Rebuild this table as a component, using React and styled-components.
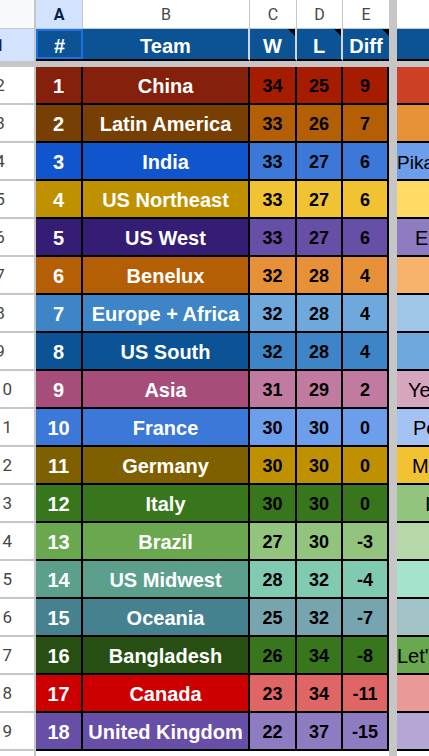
import React from "react";
import styled, { createGlobalStyle } from "styled-components";

const GlobalStyle = createGlobalStyle`
  html, body {
    margin: 0;
    padding: 0;
    background: #fff;
    overflow: hidden;
  }
  body {
    font-family: "Liberation Sans", Arial, sans-serif;
  }
`;

// row header | A | B | C | D | E | freeze bar | F
const COLUMNS = "36px 47px 167px 47px 46px 46px 8px 32px";
const FREEZE = "#c6c6c6";
const GRID = "#c4c7c5";
const HEADER_BLUE = "#0b5394";

const Sheet = styled.div`
  width: 429px;
  height: 756px;
  overflow: hidden;
  background: #fff;
`;

const Row = styled.div`
  display: grid;
  grid-template-columns: ${COLUMNS};
  height: ${(p) => p.$h}px;
`;

const FreezeRow = styled.div`
  height: 6px;
  background: ${FREEZE};
`;

const FreezeCol = styled.div`
  background: ${FREEZE};
`;

/* column letters */
const Corner = styled.div`
  background: #f8f9fa;
  border-right: 2px solid ${GRID};
  border-bottom: 1px solid ${GRID};
`;

const ColLetter = styled.div`
  display: flex;
  align-items: center;
  justify-content: center;
  background: ${(p) => (p.$active ? "#d3e3fd" : "#fff")};
  color: ${(p) => (p.$active ? "#041e49" : "#444746")};
  font-family: Roboto, "Liberation Sans", Arial, sans-serif;
  font-size: 16px;
  font-weight: ${(p) => (p.$active ? 700 : 400)};
  border-right: ${(p) => (p.$last ? 0 : `1px solid ${GRID}`)};
  border-bottom: 1px solid ${GRID};
`;

/* row numbers, scrolled so only the right part shows */
const RowHead = styled.div`
  display: flex;
  align-items: center;
  overflow: hidden;
  box-sizing: border-box;
  background: ${(p) => (p.$active ? "#d3e3fd" : "#fff")};
  color: ${(p) => (p.$active ? "#041e49" : "#444746")};
  border-right: 2px solid ${GRID};
  border-bottom: ${(p) => (p.$open ? 0 : p.$active ? 0 : `2px solid ${GRID}`)};
  font-family: Roboto, "Liberation Sans", Arial, sans-serif;
  font-size: 17px;

  span {
    flex: none;
    width: 14px;
    margin-left: -7px;
    text-align: center;
  }
`;

const HeadCell = styled.div`
  position: relative;
  display: flex;
  align-items: center;
  justify-content: center;
  box-sizing: border-box;
  padding-top: 4px;
  background: ${HEADER_BLUE};
  color: #fff;
  font-size: 20px;
  font-weight: 700;
  border-right: ${(p) => (p.$edge ? `2px solid ${p.$edge}` : 0)};
  border-bottom: 2px solid #000;
  box-shadow: ${(p) => (p.$selected ? "inset 0 0 0 2px #1a73e8" : "none")};

  &::after {
    content: "";
    display: ${(p) => (p.$note ? "block" : "none")};
    position: absolute;
    top: 0;
    right: 0;
    border-style: solid;
    border-width: 0 7px 7px 0;
    border-color: transparent #000 transparent transparent;
  }
`;

const TeamCell = styled.div`
  display: flex;
  align-items: center;
  justify-content: center;
  box-sizing: border-box;
  padding-top: 3px;
  background: ${(p) => p.$bg};
  color: #fff;
  font-size: 20px;
  font-weight: 700;
  white-space: nowrap;
  overflow: hidden;
  border-right: 2px solid #000;
  border-bottom: 2px solid #000;
`;

const StatCell = styled(TeamCell)`
  color: #000;
  font-size: 18px;
`;

const NoteCell = styled.div`
  display: flex;
  align-items: center;
  box-sizing: border-box;
  padding: 3px 0 0 ${(p) => p.$pad || 0}px;
  background: ${(p) => p.$bg};
  color: #000;
  font-size: ${(p) => p.$size || 20}px;
  white-space: nowrap;
  overflow: hidden;
  border-bottom: 2px solid #000;
`;

const Blank = styled.div`
  background: #fff;
  grid-column: ${(p) => p.$span || "auto"};
`;

const teams = [
  { n: 1, name: "China", base: "#85200c", mid: "#a61c00", light: "#cc4125", w: 34, l: 25, d: 9 },
  { n: 2, name: "Latin America", base: "#783f04", mid: "#b45f06", light: "#e69138", w: 33, l: 26, d: 7 },
  { n: 3, name: "India", base: "#1155cc", mid: "#3c78d8", light: "#6d9eeb", w: 33, l: 27, d: 6, note: "Pika", pad: 0, size: 19 },
  { n: 4, name: "US Northeast", base: "#bf9000", mid: "#f1c232", light: "#ffd966", w: 33, l: 27, d: 6 },
  { n: 5, name: "US West", base: "#351c75", mid: "#674ea7", light: "#8e7cc3", w: 33, l: 27, d: 6, note: "E", pad: 18 },
  { n: 6, name: "Benelux", base: "#b45f06", mid: "#e69138", light: "#f6b26b", w: 32, l: 28, d: 4 },
  { n: 7, name: "Europe + Africa", base: "#3d85c6", mid: "#6fa8dc", light: "#9fc5e8", w: 32, l: 28, d: 4 },
  { n: 8, name: "US South", base: "#0b5394", mid: "#3d85c6", light: "#6fa8dc", w: 32, l: 28, d: 4 },
  { n: 9, name: "Asia", base: "#a64d79", mid: "#c27ba0", light: "#d5a6bd", w: 31, l: 29, d: 2, note: "Ye", pad: 11 },
  { n: 10, name: "France", base: "#3c78d8", mid: "#6d9eeb", light: "#a4c2f4", w: 30, l: 30, d: 0, note: "Pe", pad: 16 },
  { n: 11, name: "Germany", base: "#7f6000", mid: "#bf9000", light: "#f1c232", w: 30, l: 30, d: 0, note: "M", pad: 15 },
  { n: 12, name: "Italy", base: "#38761d", mid: "#38761d", light: "#93c47d", w: 30, l: 30, d: 0, note: "I", pad: 28 },
  { n: 13, name: "Brazil", base: "#6aa84f", mid: "#93c47d", light: "#b6d7a8", w: 27, l: 30, d: -3 },
  { n: 14, name: "US Midwest", base: "#5b9f8c", mid: "#7fcab0", light: "#a5e3cc", w: 28, l: 32, d: -4 },
  { n: 15, name: "Oceania", base: "#45818e", mid: "#76a5af", light: "#a2c4c9", w: 25, l: 32, d: -7 },
  { n: 16, name: "Bangladesh", base: "#274e13", mid: "#38761d", light: "#6aa84f", w: 26, l: 34, d: -8, note: "Let's", pad: 0 },
  { n: 17, name: "Canada", base: "#cc0000", mid: "#e06666", light: "#ea9999", w: 23, l: 34, d: -11 },
  { n: 18, name: "United Kingdom", base: "#674ea7", mid: "#8e7cc3", light: "#b4a7d6", w: 22, l: 37, d: -15 },
];

const TeamRow = ({ team, sheetRow }) => (
  <Row $h={38}>
    <RowHead>
      <span>{sheetRow}</span>
    </RowHead>
    <TeamCell $bg={team.base}>{team.n}</TeamCell>
    <TeamCell $bg={team.base}>{team.name}</TeamCell>
    <StatCell $bg={team.mid}>{team.w}</StatCell>
    <StatCell $bg={team.mid}>{team.l}</StatCell>
    <StatCell $bg={team.mid}>{team.d}</StatCell>
    <FreezeCol />
    <NoteCell $bg={team.light} $pad={team.pad} $size={team.size}>
      {team.note}
    </NoteCell>
  </Row>
);

export default function App() {
  return (
    <Sheet>
      <GlobalStyle />
      <Row $h={29}>
        <Corner />
        <ColLetter $active>A</ColLetter>
        <ColLetter>B</ColLetter>
        <ColLetter>C</ColLetter>
        <ColLetter>D</ColLetter>
        <ColLetter $last>E</ColLetter>
        <FreezeCol />
        <ColLetter $last />
      </Row>
      <Row $h={32}>
        <RowHead $active>
          <span>1</span>
        </RowHead>
        <HeadCell $selected>#</HeadCell>
        <HeadCell $edge="#cfd6df">Team</HeadCell>
        <HeadCell $edge="#cfd6df" $note>W</HeadCell>
        <HeadCell $edge="#cfd6df" $note>L</HeadCell>
        <HeadCell $note>Diff</HeadCell>
        <FreezeCol />
        <HeadCell />
      </Row>
      <FreezeRow />
      {teams.map((t, i) => (
        <TeamRow key={t.name} team={t} sheetRow={i + 2} />
      ))}
      <Row $h={5}>
        <RowHead $open />
        <Blank $span="span 5" />
        <FreezeCol />
        <Blank />
      </Row>
    </Sheet>
  );
}
